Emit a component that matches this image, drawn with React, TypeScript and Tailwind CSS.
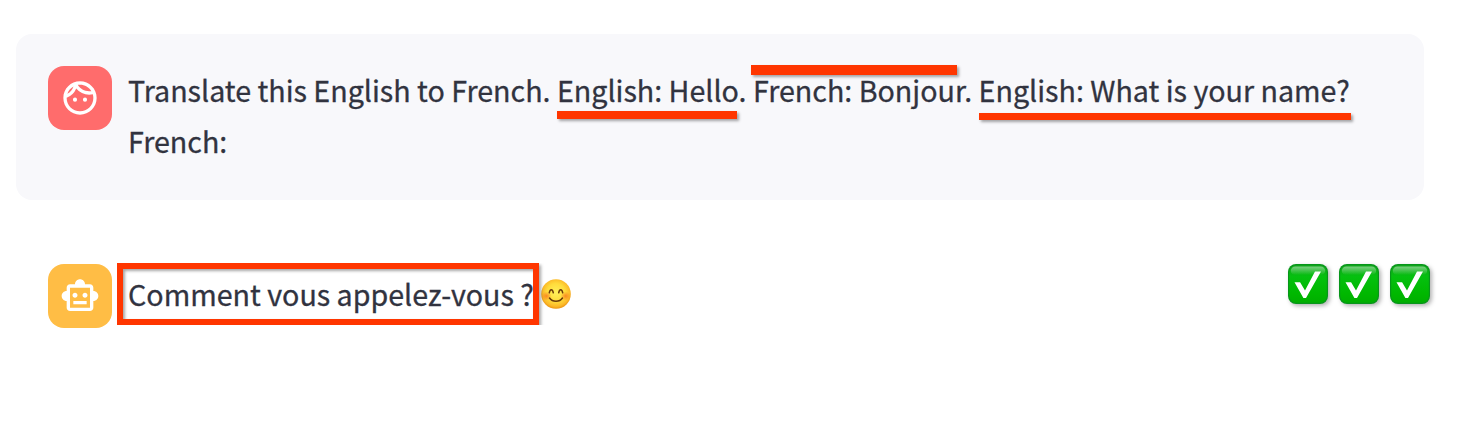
import { MdOutlineFace, MdOutlineSmartToy } from "react-icons/md";

const message =
  "font-['Noto_Sans_CJK_SC','Noto_Sans',sans-serif] text-[28.65px] leading-[51px] text-[#31333f] [-webkit-text-stroke:0.3px_#31333f]";

function Check() {
  return (
    <svg
      viewBox="0 0 40 40"
      className="size-10 drop-shadow-[2px_2px_2px_rgba(0,0,0,0.3)]"
    >
      <defs>
        <linearGradient id="tile" x1="0" y1="0" x2="0" y2="1">
          <stop offset="0" stopColor="#12a51c" />
          <stop offset="0.3" stopColor="#05c00f" />
          <stop offset="0.75" stopColor="#00b800" />
          <stop offset="1" stopColor="#00ae00" />
        </linearGradient>
        <linearGradient id="gloss" x1="0" y1="0" x2="0" y2="1">
          <stop offset="0" stopColor="#fff" stopOpacity="0.45" />
          <stop offset="1" stopColor="#fff" stopOpacity="0" />
        </linearGradient>
      </defs>
      <rect width="40" height="40" rx="8" fill="#07961a" />
      <rect x="1.2" y="1.2" width="37.6" height="37.6" rx="7" fill="url(#tile)" />
      <rect x="2.8" y="2.5" width="34.4" height="8.5" rx="4.5" fill="url(#gloss)" />
      <path d="M6.5 18.2h5.6l4.9 8.3L27 7.6h6L18 34h-2.6Z" fill="#fff" />
    </svg>
  );
}

function Smile() {
  return (
    <svg viewBox="0 0 30 30" className="size-[30px]">
      <defs>
        <radialGradient id="face" cx="0.5" cy="0.45" r="0.55">
          <stop offset="0" stopColor="#fff05a" />
          <stop offset="0.55" stopColor="#ffdc3c" />
          <stop offset="0.85" stopColor="#fcb928" />
          <stop offset="1" stopColor="#eb9412" />
        </radialGradient>
        <radialGradient id="blush">
          <stop offset="0" stopColor="#f9701c" stopOpacity="0.75" />
          <stop offset="1" stopColor="#f9701c" stopOpacity="0" />
        </radialGradient>
      </defs>
      <circle cx="15" cy="15" r="14.8" fill="url(#face)" />
      <ellipse cx="5.5" cy="17" rx="5" ry="4.5" fill="url(#blush)" />
      <ellipse cx="24.5" cy="17" rx="5" ry="4.5" fill="url(#blush)" />
      <g fill="none" stroke="#6b3a0a" strokeWidth="1.5" strokeLinecap="round">
        <path d="M8.3 13.8c.6-4.2 3.4-4.2 4 0M17.7 13.8c.6-4.2 3.4-4.2 4 0" />
        <path d="M8.5 19c3 4.3 10 4.3 13 0" />
      </g>
    </svg>
  );
}

export default function App() {
  return (
    <main className="relative h-[446px] w-[1470px] overflow-hidden bg-white pl-4 pt-[34px]">
      <section className="flex h-[166px] w-[1408px] gap-4 rounded-2xl bg-[#f8f8fb] p-8">
        <div className="flex size-16 shrink-0 items-center justify-center rounded-2xl bg-[#ff6c6c] text-white">
          <MdOutlineFace size={40} />
        </div>
        <p className={`${message} -mt-0.5 whitespace-nowrap`}>
          Translate this English to French. English: Hello. French: Bonjour. English: What is your name?
          <br />
          French:
        </p>
      </section>

      <section className="mt-16 flex h-16 w-[1414px] pl-8">
        <div className="flex size-16 shrink-0 items-center justify-center rounded-2xl bg-[#ffbd45] text-white">
          <MdOutlineSmartToy size={40} />
        </div>
        <p className={`${message} ml-4 mt-1 w-[413px] whitespace-nowrap`}>Comment vous appelez-vous ?</p>
        <div className="mt-[15px]">
          <Smile />
        </div>
        <div className="ml-auto flex gap-[11px]">
          <Check />
          <Check />
          <Check />
        </div>
      </section>

      <div className="absolute left-[557px] top-[111px] h-2 w-[180px] bg-[#ff3600] shadow-[2px_2px_3px_rgba(0,0,0,0.35)]" />
      <div className="absolute left-[751px] top-[65px] h-[10px] w-[206px] bg-[#ff3600] shadow-[2px_2px_3px_rgba(0,0,0,0.35)]" />
      <div className="absolute left-[979px] top-[113px] h-[7px] w-[372px] bg-[#ff3600] shadow-[2px_2px_3px_rgba(0,0,0,0.35)]" />
      <div className="absolute left-[117px] top-[263px] h-[62px] w-[428px] overflow-hidden">
        <div className="h-[62px] w-[422px] border-6 border-[#ff3600] shadow-[2px_2px_3px_rgba(0,0,0,0.35),inset_2px_2px_3px_rgba(0,0,0,0.35)]" />
      </div>
    </main>
  );
}
